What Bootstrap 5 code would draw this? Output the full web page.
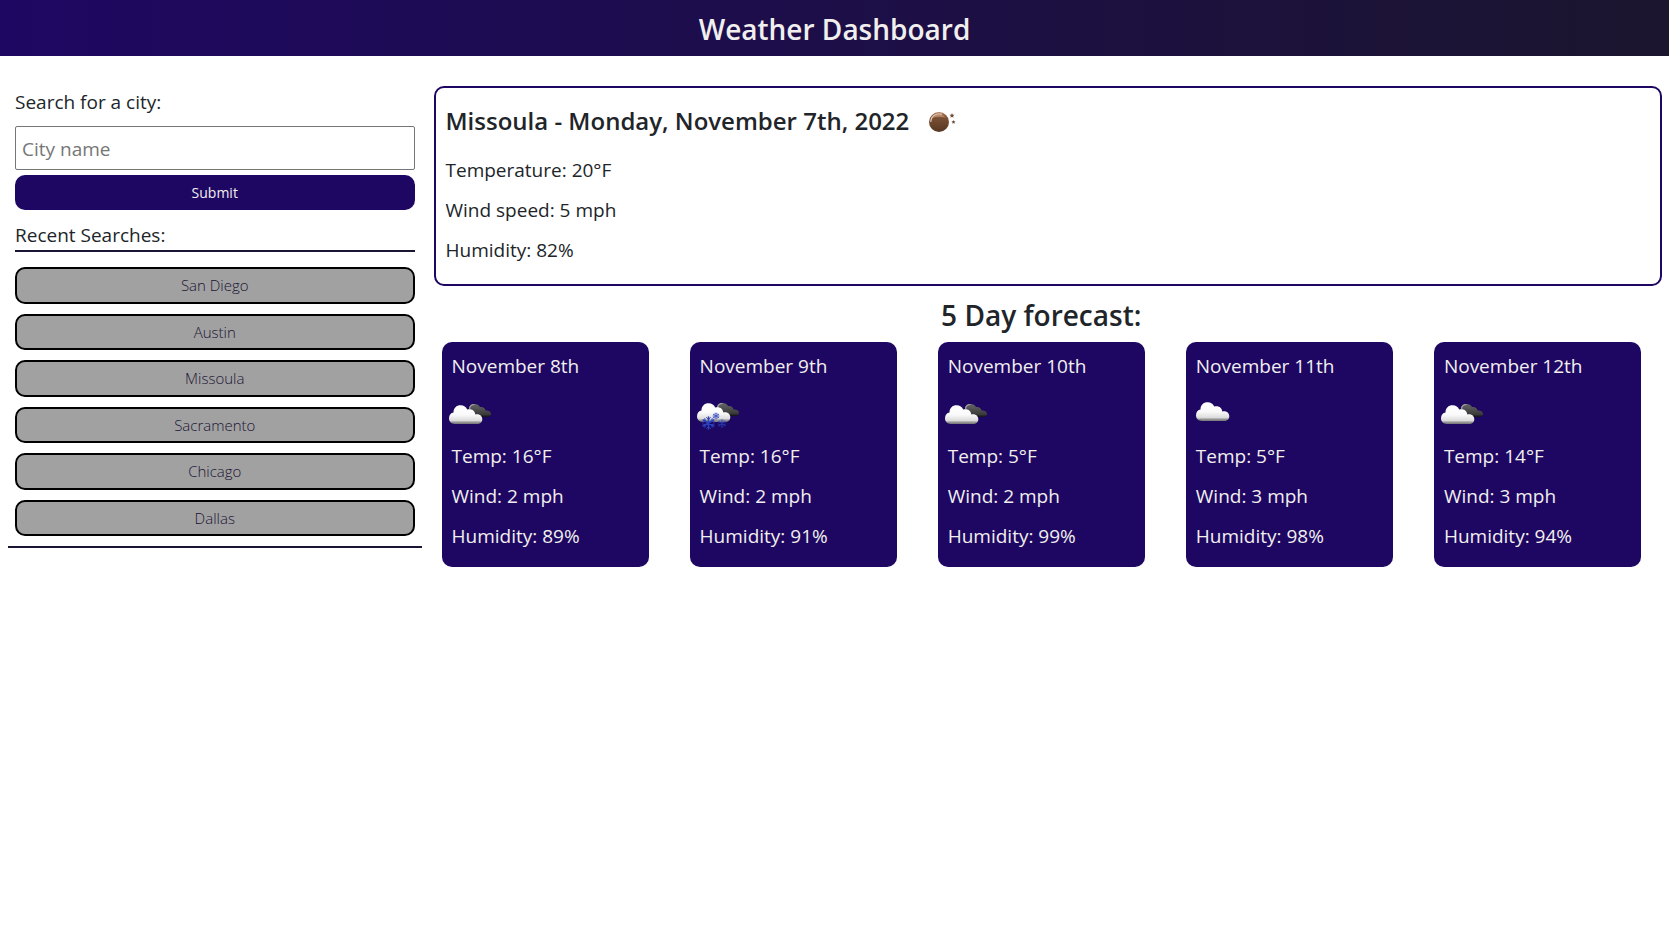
<!DOCTYPE html>
<html lang="en">
<head>
<meta charset="utf-8">
<meta name="viewport" content="width=device-width, initial-scale=1">
<title>Weather Dashboard</title>
<link rel="stylesheet" href="https://cdn.jsdelivr.net/npm/bootstrap@5.3.0/dist/css/bootstrap.min.css">
<style>
  :root { --navy: #1e0762; --ink: #1b1433; --pale: #f1efee; }
  body { font-family: "Segoe UI", "Open Sans", sans-serif; font-size: 19px; }
  .site-header { background: linear-gradient(90deg, var(--navy), #1b152e); color: var(--pale); }
  .site-header h1 { font-size: 28px; line-height: 36px; padding: 11px 0 9px; font-weight: 600; }
  .layout { display: grid; grid-template-columns: 25% minmax(0, 1fr); column-gap: 12px; padding: 30px 7px 30px 8px; align-items: start; }
  .search-panel { padding: 0 7px 10px; border-bottom: 2px solid var(--ink); }
  .search-panel label, .recent-title, .reading { line-height: 30px; }
  .search-panel label { padding-top: 1px; margin-bottom: 9px; }
  .city-input { height: 44px; border: 1px solid #767676; border-radius: 2px; padding: 1px 6px 0; font-size: 19px; }
  .city-input::placeholder { color: #767676; }
  .submit-btn { background: var(--navy); color: var(--pale); border: 0; border-radius: 10px; height: 35px; margin-top: 5px; font-size: 14px; }
  .recent-title { font-size: 19px; font-weight: 400; border-bottom: 2px solid var(--ink); margin: 11px 0 15px; line-height: 29px; }
  .recent-list { gap: 10px; }
  .recent-btn { background: #a1a1a1; color: var(--ink); border: 2px solid #000; border-radius: 10px; padding: 5px; font-size: 15px; font-weight: 300; }
  .current { border: 2px solid var(--navy); border-radius: 10px; padding: 15px 10px 19px; }
  .current h2 { font-size: 24px; line-height: 36px; font-weight: 600; margin-bottom: 16px; column-gap: 12px; }
  .forecast-title { font-size: 28px; line-height: 36px; font-weight: 600; margin: 11px 0 9px; }
  .readings { gap: 10px; }
  .forecast { padding: 0 21px 0 8px; }
  .days { display: grid; grid-template-columns: repeat(5, minmax(0, 1fr)); column-gap: 41px; row-gap: 20px; }
  .day-card { background: var(--navy); color: var(--pale); border-radius: 10px; padding: 9px 10px 16px; }
  .day-card .sky { margin-left: -7px; }
  @media (max-width: 991px) {
    .layout { grid-template-columns: 1fr; row-gap: 20px; }
    .days { grid-template-columns: repeat(auto-fill, minmax(190px, 1fr)); }
  }
</style>
</head>
<body>
<svg class="position-absolute" width="0" height="0" aria-hidden="true">
  <defs>
    <linearGradient id="white-fill" x1="0" y1="0" x2="0" y2="1">
      <stop offset="0" stop-color="#fff"/><stop offset=".5" stop-color="#fafafa"/><stop offset=".82" stop-color="#dcdcdc"/><stop offset=".9" stop-color="#999"/><stop offset="1" stop-color="#777"/>
    </linearGradient>
    <linearGradient id="dark-fill" x1="0" y1="0" x2="0" y2="1">
      <stop offset="0" stop-color="#666"/><stop offset=".8" stop-color="#3a3a3a"/><stop offset="1" stop-color="#111"/>
    </linearGradient>
    <linearGradient id="moon-fill" x1="0" y1="0" x2="0" y2="1">
      <stop offset="0" stop-color="#b5805c"/><stop offset=".3" stop-color="#7a5034"/><stop offset="1" stop-color="#573620"/>
    </linearGradient>
    <path id="front-cloud" fill="url(#white-fill)" d="M10 31C6 31 4 28.500 4 25.300C4 22 6 19.800 8.500 19.500C8.500 15 11.500 12.300 15.500 12.300C18.800 12.300 21.300 14 22.200 16.500C26.500 15.200 30 17.500 30.300 21.500C34.500 20.500 37.300 23 37.300 26.300C37.300 29.500 35 31 32 31Z"/>
    <g id="back-cloud">
      <path fill="url(#dark-fill)" d="M24 16C24 13 26.500 11 29.500 11C32 11 34 12 35 14C38 13.500 40 15 40.500 17.500C43.500 17 46 18.500 46 21C46 23 44 24 42 24H30Z"/>
      <path fill="none" stroke="#a5a5a5" stroke-width="1.200" d="M24.500 16C24.500 13 27 11.300 29.500 11.500"/>
    </g>
    <g id="flake" fill="none" stroke="#2b41c0" stroke-linecap="round">
      <path stroke-width="1.600" d="M0-6V6M-5.200-3L5.200 3M-5.200 3L5.200-3"/>
      <path stroke-width=".9" d="M-2-5.500L0-3.500L2-5.500M-2 5.500L0 3.500L2 5.500M-5.800-1L-3-1.700L-3.700-4.500M5.800 1L3 1.700L3.700 4.500M-5.800 1L-3 1.700L-3.700 4.500M5.800-1L3-1.700L3.700-4.500"/>
    </g>
    <path id="star" fill="#6b4630" d="M0-2.500L.7-.8L2.500-.7L1.100.5L1.600 2.300L0 1.300L-1.600 2.300L-1.100.5L-2.500-.7L-.7-.8Z"/>
    <symbol id="broken" viewBox="0 -2 50 40"><use href="#back-cloud"/><use href="#front-cloud"/></symbol>
    <symbol id="overcast" viewBox="0 -2 50 40"><use href="#front-cloud" transform="translate(3 -3)"/></symbol>
    <symbol id="snow" viewBox="0 -2 50 40">
      <use href="#back-cloud" y="-1"/><use href="#front-cloud" y="-2"/>
      <use href="#flake" transform="translate(15.500 30)"/>
      <use href="#flake" transform="translate(23 23) scale(.5)"/>
      <use href="#flake" transform="translate(29 30.500) scale(.65)" opacity=".75"/>
    </symbol>
    <symbol id="clear-night" viewBox="0 0 50 36">
      <circle cx="18" cy="19" r="10" fill="url(#moon-fill)"/>
      <path d="M9.800 19A8.200 8.200 0 0 1 21 11.400" fill="none" stroke="#e3cdbf" stroke-width="1.200"/>
      <path d="M11.500 14.500Q18 8 24.500 14.500Q18 13 11.500 14.500Z" fill="#c79b7d" opacity=".7"/>
      <use href="#star" x="31" y="12.500"/><use href="#star" transform="translate(32.500 19) scale(.8)"/>
    </symbol>
  </defs>
</svg>

<header class="site-header text-center"><h1 class="m-0">Weather Dashboard</h1></header>

<main class="layout">
  <aside class="search-panel">
    <form onsubmit="return false">
      <label class="d-block" for="city">Search for a city:</label>
      <input class="city-input d-block w-100" id="city" type="text" placeholder="City name">
      <button class="submit-btn d-block w-100" type="submit">Submit</button>
    </form>
    <h2 class="recent-title">Recent Searches:</h2>
    <div class="recent-list d-flex flex-column">
      <button class="recent-btn btn" type="button">San Diego</button>
      <button class="recent-btn btn" type="button">Austin</button>
      <button class="recent-btn btn" type="button">Missoula</button>
      <button class="recent-btn btn" type="button">Sacramento</button>
      <button class="recent-btn btn" type="button">Chicago</button>
      <button class="recent-btn btn" type="button">Dallas</button>
    </div>
  </aside>

  <div>
    <section class="current">
      <h2 class="d-flex align-items-center flex-wrap">Missoula - Monday, November 7th, 2022
        <svg width="50" height="36" role="img" aria-label="Clear night"><use href="#clear-night"/></svg></h2>
      <div class="readings d-flex flex-column">
        <p class="reading m-0">Temperature: 20°F</p>
        <p class="reading m-0">Wind speed: 5 mph</p>
        <p class="reading m-0">Humidity: 82%</p>
      </div>
    </section>

    <section class="forecast">
      <h2 class="forecast-title text-center">5 Day forecast:</h2>
      <div class="days">
        <article class="day-card readings d-flex flex-column">
          <p class="reading m-0">November 8th</p>
          <svg class="sky" width="50" height="40" role="img" aria-label="Broken clouds"><use href="#broken"/></svg>
          <p class="reading m-0">Temp: 16°F</p>
          <p class="reading m-0">Wind: 2 mph</p>
          <p class="reading m-0">Humidity: 89%</p>
        </article>
        <article class="day-card readings d-flex flex-column">
          <p class="reading m-0">November 9th</p>
          <svg class="sky" width="50" height="40" role="img" aria-label="Snow"><use href="#snow"/></svg>
          <p class="reading m-0">Temp: 16°F</p>
          <p class="reading m-0">Wind: 2 mph</p>
          <p class="reading m-0">Humidity: 91%</p>
        </article>
        <article class="day-card readings d-flex flex-column">
          <p class="reading m-0">November 10th</p>
          <svg class="sky" width="50" height="40" role="img" aria-label="Broken clouds"><use href="#broken"/></svg>
          <p class="reading m-0">Temp: 5°F</p>
          <p class="reading m-0">Wind: 2 mph</p>
          <p class="reading m-0">Humidity: 99%</p>
        </article>
        <article class="day-card readings d-flex flex-column">
          <p class="reading m-0">November 11th</p>
          <svg class="sky" width="50" height="40" role="img" aria-label="Scattered clouds"><use href="#overcast"/></svg>
          <p class="reading m-0">Temp: 5°F</p>
          <p class="reading m-0">Wind: 3 mph</p>
          <p class="reading m-0">Humidity: 98%</p>
        </article>
        <article class="day-card readings d-flex flex-column">
          <p class="reading m-0">November 12th</p>
          <svg class="sky" width="50" height="40" role="img" aria-label="Broken clouds"><use href="#broken"/></svg>
          <p class="reading m-0">Temp: 14°F</p>
          <p class="reading m-0">Wind: 3 mph</p>
          <p class="reading m-0">Humidity: 94%</p>
        </article>
      </div>
    </section>
  </div>
</main>
<script src="https://cdn.jsdelivr.net/npm/bootstrap@5.3.0/dist/js/bootstrap.bundle.min.js"></script>
</body>
</html>
